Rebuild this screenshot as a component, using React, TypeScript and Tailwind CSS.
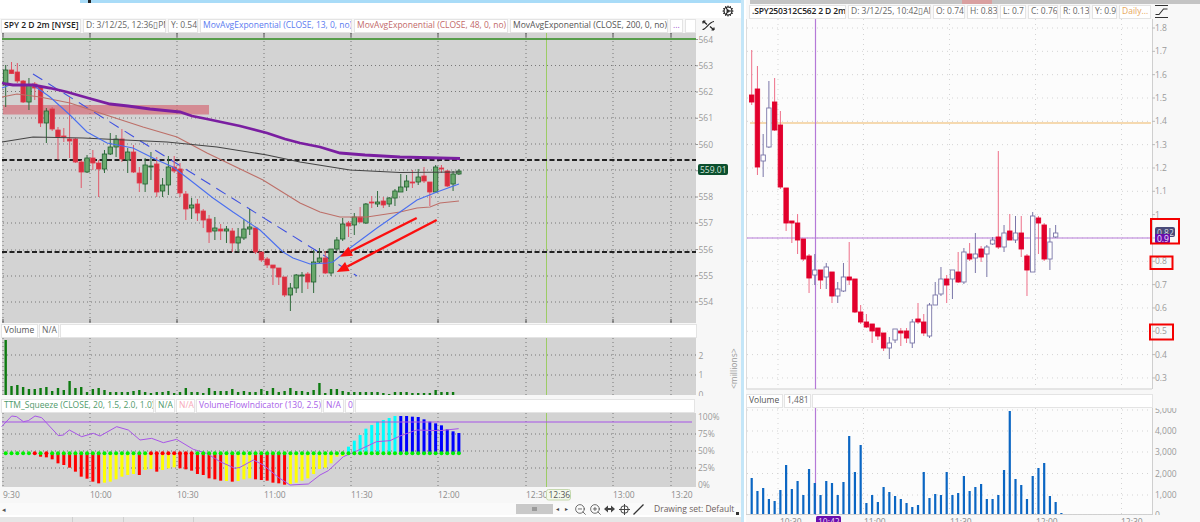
import { Cog, ZoomIn, ZoomOut } from 'lucide-react';

type Candle = [number, number, number, number]; // wick top, body top, body bottom, wick bottom

const GREEN = 'g';
const RED = 'r';

// page y coordinates, one entry per 2m bar
const spy: [string, ...Candle][] = [
  [GREEN, 65, 70, 85, 107], [RED, 62, 70, 73.5, 74], [RED, 63, 72, 81, 83], [RED, 80, 81, 102, 103],
  [GREEN, 78, 85, 102, 110], [RED, 82, 84, 88, 100], [RED, 87, 87, 123, 127], [GREEN, 108, 111, 123, 143],
  [RED, 107, 109, 129, 131], [RED, 127, 130, 137, 160], [RED, 128, 136, 137, 142], [RED, 97, 139, 141, 158],
  [RED, 138, 139, 162, 163], [RED, 160, 162, 172, 188], [GREEN, 155, 158, 172, 173], [RED, 150, 158, 163, 170],
  [RED, 160, 163, 169, 197], [GREEN, 150, 154, 169, 173], [GREEN, 133, 147, 154, 155], [GREEN, 135, 139, 147, 157],
  [RED, 129, 139, 159, 162], [GREEN, 148, 152, 160, 173], [RED, 145, 152, 172, 173], [RED, 167, 173, 183, 192],
  [GREEN, 158, 165, 184, 192], [GREEN, 152, 166, 167, 180], [RED, 157, 164, 192, 197], [GREEN, 178, 185, 191, 197],
  [GREEN, 156, 167, 185, 195], [RED, 156, 167, 171, 173], [RED, 163, 169, 193, 197], [RED, 191, 194, 209, 220],
  [GREEN, 198, 205, 208, 219], [RED, 199, 204, 213, 221], [RED, 209, 211, 220, 228], [RED, 215, 219, 232, 243],
  [GREEN, 217, 228, 231, 240], [RED, 224, 229, 231, 240], [GREEN, 226, 229, 231, 243], [RED, 228, 231, 243, 252],
  [GREEN, 228, 237, 243, 252], [GREEN, 219, 229, 238, 240], [GREEN, 209, 227, 229, 235], [RED, 228, 228, 252, 254],
  [RED, 252, 252, 260, 262], [RED, 257, 259, 265, 268], [RED, 265, 265, 268, 285], [RED, 268, 268, 277, 285],
  [RED, 277, 277, 295, 297], [GREEN, 283, 288, 295, 311], [GREEN, 274, 275, 288, 293], [GREEN, 272, 275, 276, 293],
  [RED, 272, 274, 282, 289], [GREEN, 250, 262, 282, 293], [GREEN, 248, 258, 262, 263], [RED, 251, 258, 273, 274],
  [GREEN, 249, 249, 273, 276], [GREEN, 237, 240, 249, 251], [GREEN, 218, 224, 239, 241], [RED, 221, 223, 226, 237],
  [GREEN, 213, 217, 225, 235], [RED, 207, 217, 222, 222], [GREEN, 203, 204, 223, 224], [RED, 196, 202, 203, 208],
  [GREEN, 191, 202, 204, 207], [RED, 197, 201, 205, 208], [GREEN, 197, 198, 204, 207], [GREEN, 189, 191, 198, 206],
  [GREEN, 174, 187, 192, 192], [GREEN, 175, 181, 187, 191], [RED, 170, 182, 183, 188], [GREEN, 169, 177, 182, 185],
  [RED, 167, 176, 181, 183], [RED, 182, 182, 192, 206], [GREEN, 165, 167, 192, 192], [RED, 165, 168, 169, 173],
  [RED, 170, 171, 186, 187], [GREEN, 171, 174, 184, 191], [GREEN, 169, 171, 174, 175],
];

const option: [string, ...Candle][] = [
  [RED, 50, 95, 102, 105], [RED, 66, 89, 167, 175], ['w', 134, 155, 161, 177], ['w', 81, 108, 147, 148],
  [RED, 78, 102, 130, 131], [RED, 111, 125, 187, 189], [RED, 188, 188, 223, 231], [RED, 221, 221, 223, 243],
  [RED, 214, 223, 240, 254], [RED, 239, 239, 259, 261], [RED, 254, 256, 278, 293], ['w', 254, 270, 275, 285],
  [RED, 270, 270, 280, 289], ['w', 263, 267, 277, 289], [RED, 272, 272, 296, 303], ['w', 282, 289, 296, 303],
  ['w', 263, 277, 291, 292], [RED, 242, 277, 280, 285], [RED, 279, 279, 312, 313], [RED, 305, 312, 322, 324],
  [RED, 314, 322, 327, 328], [RED, 324, 324, 331, 343], [RED, 328, 328, 336, 340], [RED, 333, 333, 348, 351],
  ['w', 337, 343, 348, 359], ['w', 329, 329, 340, 343], [RED, 328, 331, 333, 346], [RED, 328, 331, 338, 343],
  ['w', 319, 322, 343, 348], [RED, 303, 319, 322, 324], [RED, 314, 322, 333, 336], ['w', 303, 305, 336, 338],
  ['w', 282, 295, 305, 305], ['w', 267, 279, 294, 296], [RED, 275, 279, 285, 303], ['w', 270, 270, 279, 299],
  [RED, 252, 272, 282, 283], ['w', 248, 252, 282, 284], [RED, 243, 254, 259, 261], ['w', 233, 254, 258, 273],
  [RED, 246, 249, 257, 262], ['w', 245, 247, 254, 277], ['w', 237, 240, 244, 245], [RED, 151, 237, 247, 249],
  ['w', 225, 233, 247, 252], [RED, 214, 231, 240, 240], ['w', 216, 233, 240, 243], [RED, 216, 233, 249, 257],
  [RED, 254, 256, 270, 296], ['w', 212, 216, 272, 272], [RED, 216, 218, 223, 254], [RED, 223, 225, 259, 261],
  ['w', 228, 242, 259, 270], ['w', 225, 233, 237, 238],
];

const optionVolTops = [
  478, 491, 488, 499, 501, 490, 465, 489, 481, 495, 469, 483, 495, 481, 483, 495, 482, 436, 472, 445, 503, 495, 502,
  487, 492, 496, 499, 503, 507, 505, 472, 498, 494, 495, 472, 495, 493, 476, 491, 487, 484, 499, 499, 495, 470, 411,
  479, 485, 499, 476, 468, 463, 496, 502, 513,
];

const spyVol = [
  55, 9, 10, 8, 6, 6, 7, 8, 4, 7, 5, 14, 7, 8, 3, 6, 7, 5, 3, 3, 3, 3, 4, 5, 3, 2, 3, 3, 4, 2, 3, 7, 3, 3, 2, 7, 4, 4, 4,
  6, 3, 4, 3, 3, 6, 4, 7, 3, 4, 7, 4, 4, 3, 5, 12, 2, 6, 6, 4, 3, 3, 3, 3, 3, 3, 2, 1, 3, 3, 3, 2, 2, 2, 2, 5, 3, 3, 3,
];

// histogram bottoms, read off the reference at 3x from y=350
const squeezeDown: [number, string][] = [
  [320, 'r'], [322, 'r'], [328, 'r'], [340, 'r'], [345, 'r'], [353, 'r'], [365, 'r'], [380, 'r'], [386, 'r'], [395, 'r'],
  [400, 'r'], [398, 'y'], [395, 'y'], [388, 'y'], [380, 'y'], [375, 'y'], [372, 'y'], [375, 'r'], [360, 'y'], [357, 'y'],
  [365, 'r'], [360, 'y'], [355, 'y'], [352, 'y'], [355, 'r'], [358, 'r'], [362, 'r'], [372, 'r'], [375, 'r'], [385, 'r'],
  [388, 'r'], [392, 'r'], [393, 'y'], [395, 'r'], [393, 'y'], [388, 'y'], [385, 'y'], [388, 'r'], [390, 'r'], [392, 'r'],
  [398, 'r'], [400, 'r'], [404, 'r'], [402, 'y'], [398, 'y'], [392, 'y'], [385, 'y'], [372, 'y'], [357, 'y'], [353, 'y'],
  [340, 'y'], [320, 'y'], [318, 'y'],
];
const squeezeCyan = [290, 272, 255, 236, 225, 215, 210, 204, 198];
const squeezeBlue = [198, 198, 200, 201, 208, 215, 220, 226, 238, 244, 249];
const redDots = [5, 7, 25, 26, 27, 28, 29, 30, 31, 32];

const vfi = [
  [5, 230], [35, 198], [50, 200], [70, 215], [85, 212], [105, 198], [125, 203], [175, 257], [190, 255], [208, 240],
  [245, 260], [280, 250], [300, 258], [350, 230], [385, 240], [420, 270], [455, 265], [490, 278], [530, 268], [580, 298],
  [620, 310], [660, 335], [705, 355], [720, 352], [760, 330], [790, 345], [835, 382], [870, 405], [925, 402], [960, 375],
  [985, 362], [1030, 320], [1070, 303], [1130, 275], [1170, 272], [1200, 258], [1250, 240], [1320, 242], [1376, 236],
].map(([x, y]) => `${x / 3},${350 + y / 3}`).join(' ');

const ema200 = '2,83 7,84 13,85 33,85 50,88 67,92 88,98 110,104 128,106 150,109 180,112 192,116 207,119 240,126 267,133 285,139 300,143 320,147 340,153 365,155 400,157 460,158.5';
const ema200b = '2,142 33,137 83,138 167,142 217,147 267,155 300,162 350,170 400,172.5 460,172';
const ema48 = '2,97 17,94 40,97 70,103 100,113 143,127 177,137 207,153 263,180 300,203 320,212 340,217 367,217 400,212 417,208 430,207 440,203 459,201';
const ema13 = '2,88 10,85 33,85 50,97 70,115 87,132 107,143 133,148 157,160 173,167 190,180 213,198 233,212 260,230 283,252 293,258 310,264 327,263 333,262 350,248 377,228 400,212 417,200 437,192 459,184';

const leftGridX = [90, 177, 264, 351, 438, 526, 613, 671];
const rightGridX = [778, 863.5, 949.5, 1035.5, 1121.5];
const barX = (i: number) => 5.7 + 5.81 * i;
const optX = (i: number) => 751.7 + 5.735 * i;

function Chip({ w, className, children }: { w: string; className?: string; children?: React.ReactNode }) {
  return (
    <div className={`${w} ${className ?? ''} h-[14px] shrink-0 flex items-center px-[2px] bg-white border border-[#e4e4e4] overflow-hidden whitespace-nowrap text-[8.5px] leading-none`}>
      {children}
    </div>
  );
}

function Arrow({ x1, y1, x2, y2 }: { x1: number; y1: number; x2: number; y2: number }) {
  const len = Math.hypot(x2 - x1, y2 - y1);
  const ux = (x2 - x1) / len;
  const uy = (y2 - y1) / len;
  const bx = x2 - ux * 12;
  const by = y2 - uy * 12;
  const head = `${x2},${y2} ${bx - uy * 5},${by + ux * 5} ${bx + uy * 5},${by - ux * 5}`;
  return (
    <g>
      <line x1={x1} y1={y1} x2={bx} y2={by} stroke="#fb0f0f" strokeWidth="2.4" />
      <polygon points={head} fill="#fb0f0f" />
    </g>
  );
}

function MainPane() {
  const rows = [65.5, 91.5, 118, 144, 170, 197, 223, 250, 276, 302];
  const labels = [564, 563, 562, 561, 560, 559, 558, 557, 556, 555, 554];
  return (
    <svg className="block shrink-0" width="741" height="290" viewBox="0 33 741 290">
      <rect x="2" y="33" width="694" height="290" fill="#d3d3d3" />
      {rows.map(y => <line key={y} x1="3" x2="696" y1={y} y2={y} stroke="#777" strokeDasharray="1 3" />)}
      {[3, ...leftGridX].map(x => (
        <g key={x}>
          <line x1={x} x2={x} y1="33" y2="323" stroke="#777" strokeDasharray="1 3" />
          <line x1={x} x2={x} y1="33" y2="37" stroke="#555" />
          <line x1={x} x2={x} y1="319" y2="323" stroke="#555" />
        </g>
      ))}
      <line x1="546.5" x2="546.5" y1="33" y2="323" stroke="#9ccc65" />
      <line x1="2" x2="696" y1="39" y2="39" stroke="#2e8b1e" strokeWidth="1.6" />
      <rect x="3" y="105" width="206" height="9.5" fill="#d5505f" opacity="0.55" />
      <line x1="2" x2="696" y1="160" y2="160" stroke="#222" strokeWidth="2" strokeDasharray="5 2.5" />
      <line x1="2" x2="696" y1="252" y2="252" stroke="#222" strokeWidth="2" strokeDasharray="5 2.5" />
      <line x1="33" y1="74" x2="357" y2="276" stroke="#3f51e0" strokeWidth="1.1" strokeDasharray="11 7" />
      {spy.map(([c, wt, bt, bb, wb], i) => {
        const x = barX(i);
        const up = c === GREEN;
        return (
          <g key={i}>
            <line x1={x} x2={x} y1={wt} y2={wb} stroke={up ? '#2f6b3c' : '#e0596a'} />
            <rect x={x - 2.2} y={bt} width="4.4" height={Math.max(bb - bt, 1)} fill={up ? '#69a86c' : '#d92f40'} stroke={up ? '#1f5f2d' : '#e0394a'} strokeWidth="0.8" />
          </g>
        );
      })}
      <polyline points={ema48} fill="none" stroke="#bd6f68" strokeWidth="1.1" />
      <polyline points={ema200b} fill="none" stroke="#444" strokeWidth="1.1" />
      <polyline points={ema13} fill="none" stroke="#4a6ff0" strokeWidth="1.1" />
      <polyline points={ema200} fill="none" stroke="#7a1ea1" strokeWidth="2.8" />
      <Arrow x1={416.7} y1={218} x2={340} y2={256.7} />
      <Arrow x1={436.7} y1={220} x2={336.7} y2={272} />
      {labels.map((p, i) => (
        <g key={p}>
          <line x1="696" x2="698" y1={39.5 + i * 26.25} y2={39.5 + i * 26.25} stroke="#999" />
          {p !== 559 && <text x="698.5" y={42.5 + i * 26.25} fontSize="8.5" fill="#9a9a9a">{p}</text>}
        </g>
      ))}
      <rect x="698" y="164" width="30" height="11" rx="2" fill="#0b4f2e" />
      <text x="700" y="172.5" fontSize="8.5" fill="#d6e6dc">559.01</text>
    </svg>
  );
}

function VolumePane() {
  return (
    <svg className="block shrink-0" width="741" height="58" viewBox="0 338 741 58">
      <rect x="2" y="338" width="694" height="57" fill="#d3d3d3" />
      {[355, 375].map(y => <line key={y} x1="3" x2="696" y1={y} y2={y} stroke="#777" strokeDasharray="1 3" />)}
      {[3, ...leftGridX].map(x => <line key={x} x1={x} x2={x} y1="338" y2="395" stroke="#777" strokeDasharray="1 3" />)}
      <line x1="546.5" x2="546.5" y1="338" y2="395" stroke="#9ccc65" />
      {spyVol.map((h, i) => <rect key={i} x={barX(i) - 1.2} y={395 - h} width="2.4" height={h} fill="#0d7a10" />)}
      {[[2, 359], [1, 378], [0, 398]].map(([n, y]) => <text key={n} x="698.5" y={y} fontSize="8.5" fill="#9a9a9a">{n}</text>)}
      <text transform="translate(737 389) rotate(-90)" fontSize="8.5" fill="#9a9a9a">&lt;millions&gt;</text>
    </svg>
  );
}

function SqueezePane() {
  const toY = (z: number) => 350 + z / 3;
  return (
    <svg className="block shrink-0" width="741" height="75" viewBox="0 413 741 75">
      <rect x="2" y="413" width="694" height="74" fill="#d3d3d3" />
      {[434, 451, 468].map(y => <line key={y} x1="3" x2="696" y1={y} y2={y} stroke="#777" strokeDasharray="1 3" />)}
      {[3, ...leftGridX].map(x => <line key={x} x1={x} x2={x} y1="413" y2="487" stroke="#777" strokeDasharray="1 3" />)}
      <line x1="546.5" x2="546.5" y1="413" y2="487" stroke="#9ccc65" />
      {squeezeDown.map(([z, c], i) => (
        <rect key={i} x={barX(i + 6) - 1.5} y="453" width="3" height={toY(z) - 453} fill={c === 'r' ? '#ff0000' : '#ffff00'} />
      ))}
      {squeezeCyan.map((z, i) => <rect key={i} x={barX(i + 59) - 1.5} y={toY(z)} width="3" height={453 - toY(z)} fill="#00ffff" />)}
      {squeezeBlue.map((z, i) => <rect key={i} x={barX(i + 68) - 1.5} y={toY(z)} width="3" height={453 - toY(z)} fill="#0000ff" />)}
      <line x1="2" x2="692" y1="422" y2="422" stroke="#a855e8" strokeWidth="1.2" />
      <polyline points={vfi} fill="none" stroke="#a855e8" strokeWidth="1" />
      {Array.from({ length: 79 }, (_, i) => (
        <circle key={i} cx={barX(i)} cy="453.3" r="2" fill={redDots.includes(i) ? '#ff0000' : '#00f000'} />
      ))}
      {[['100%', 420], ['75%', 437], ['50%', 454], ['25%', 471], ['0%', 488]].map(([t, y]) => (
        <text key={t} x="698" y={y} fontSize="8.5" fill="#9a9a9a">{t}</text>
      ))}
    </svg>
  );
}

function TimeAxis() {
  const ticks: [string, number][] = [['9:30', 3], ['10:00', 90], ['10:30', 177], ['11:00', 264], ['11:30', 351], ['12:00', 438], ['12:30', 526], ['13:00', 613], ['13:20', 671]];
  return (
    <svg className="block shrink-0" width="741" height="15" viewBox="0 488 741 15">
      {ticks.map(([t, x]) => <text key={t} x={x} y="498" fontSize="8.5" fill="#8c8c8c">{t}</text>)}
      <rect x="546.5" y="489.5" width="24" height="10.5" rx="2" fill="#f3f8ec" stroke="#c5d8ae" />
      <text x="548.5" y="498" fontSize="8.5" fill="#555">12:36</text>
    </svg>
  );
}

function Toolbar() {
  return (
    <div className="h-[12px] shrink-0 flex items-center bg-[#fafafa] text-[#444]">
      <span className="pl-[2px] w-[516px] shrink-0 text-[7px] leading-none text-[#555]">◂</span>
      <div className="w-[37px] h-[10px] shrink-0 bg-[#c9c9c9] flex items-center justify-center">
        <div className="w-[5px] h-[4px] bg-[#9a9a9a]" />
      </div>
      <span className="ml-[3px] w-[9px] shrink-0 text-[6px] leading-none">◂</span>
      <span className="w-[9px] shrink-0 text-[6px] leading-none">▸</span>
      <ZoomOut size={13} strokeWidth={1.4} className="shrink-0 mr-[2px]" />
      <ZoomIn size={13} strokeWidth={1.4} className="shrink-0" />
      <svg className="ml-[2px] shrink-0" width="11" height="8" viewBox="0 0 11 8">
        <path d="M0 4 L4 0.5 V7.5 Z M11 4 L7 0.5 V7.5 Z M4 3 H7 V5 H4 Z" fill="#444" />
      </svg>
      <svg className="ml-[4px] shrink-0" width="11" height="11" viewBox="0 0 11 11" fill="none" stroke="#444">
        <circle cx="5.5" cy="5.5" r="3.8" />
        <path d="M5.5 0 V11 M0 5.5 H11" />
      </svg>
      <svg className="ml-[3px] shrink-0" width="11" height="11" viewBox="0 0 11 11" fill="none" stroke="#333" strokeWidth="1.3">
        <path d="M0.5 10.5 L10.5 0.5" />
      </svg>
      <span className="ml-[10px] w-[81px] shrink-0 text-[8.5px] leading-none text-[#6e5f60] whitespace-nowrap">Drawing set: Default</span>
      <div className="ml-[1px] mt-[9px] w-[3px] h-[3px] shrink-0 bg-[#333]" />
    </div>
  );
}

function LeftPanel() {
  return (
    <div className="w-[741px] shrink-0 flex flex-col bg-[#f7f7f7]">
      <div className="h-[3px] shrink-0 flex bg-[#a9dcf8]">
        <div className="w-[80px] bg-white" />
        <div className="ml-[8px] w-[3px] bg-[#222]" />
      </div>
      <div className="h-[15px] shrink-0 flex items-center justify-end pr-[7px] bg-white">
        <Cog size={12} strokeWidth={2.2} className="text-[#222]" />
      </div>
      <div className="h-[15px] shrink-0 flex items-center gap-[2px] pl-[1px] bg-[#f7f7f7]">
        <Chip w="w-[80px]" className="font-semibold text-[#222]">SPY 2 D 2m [NYSE]</Chip>
        <Chip w="w-[83px]" className="text-[#666]">D: 3/12/25, 12:36▯PM</Chip>
        <Chip w="w-[30px]" className="text-[#666]">Y: 0.54</Chip>
        <Chip w="w-[152px]" className="text-[#5b7bf0]">MovAvgExponential (CLOSE, 13, 0, no)</Chip>
        <Chip w="w-[154px]" className="text-[#c26a6a]">MovAvgExponential (CLOSE, 48, 0, no)</Chip>
        <Chip w="w-[158px]" className="text-[#555]">MovAvgExponential (CLOSE, 200, 0, no)</Chip>
        <Chip w="w-[13px]" className="text-[#a050d0]">...</Chip>
        <Chip w="w-[11px]" />
        <svg className="ml-[4px] shrink-0" width="13" height="11" viewBox="0 0 13 11" fill="none" stroke="#222" strokeWidth="1.2">
          <path d="M0.5 9.5 C4 9.5 7 2 12 1.5 M1 1 L5 4.5 M1 1 H3.5 M1 1 V3.5 M12 10 L8 6.5 M12 10 H9.5 M12 10 V7.5" />
        </svg>
      </div>
      <MainPane />
      <div className="h-[15px] shrink-0 flex items-center gap-[1px] pl-[1px]">
        <Chip w="w-[37px]" className="text-[#555]">Volume</Chip>
        <Chip w="w-[20px]" className="text-[#666]">N/A</Chip>
        <Chip w="w-[637px]" />
      </div>
      <VolumePane />
      <div className="h-[2px] shrink-0" />
      <div className="h-[15px] shrink-0 flex items-center gap-[1px] pl-[1px]">
        <Chip w="w-[153px]" className="text-[#4f9a6a]">TTM_Squeeze (CLOSE, 20, 1.5, 2.0, 1.0)</Chip>
        <Chip w="w-[20px]" className="text-[#4f9a6a]">N/A</Chip>
        <Chip w="w-[19px]" className="text-[#f7a9b8]">N/A</Chip>
        <Chip w="w-[126px]" className="text-[#a860e8]">VolumeFlowIndicator (130, 2.5)</Chip>
        <Chip w="w-[21px]" className="text-[#a860e8]">N/A</Chip>
        <Chip w="w-[9px]" className="text-[#a860e8]">0</Chip>
        <Chip w="w-[340px]" />
      </div>
      <SqueezePane />
      <TimeAxis />
      <Toolbar />
      <div className="h-[2px] shrink-0 bg-white" />
      <div className="h-[5px] shrink-0 flex bg-[#e6e6e6]">
        <div className="w-[73px] border-r border-[#cfcfcf]" />
        <div className="w-[51px] border-r border-[#cfcfcf]" />
        <div className="w-[70px] border-r border-[#cfcfcf]" />
      </div>
    </div>
  );
}

function OptionPane() {
  const rows = [1.8, 1.7, 1.6, 1.5, 1.4, 1.3, 1.2, 1.1, 1, 0.9, 0.8, 0.7, 0.6, 0.5, 0.4, 0.3];
  const rowY = (i: number) => 28 + i * 23.33;
  return (
    <svg className="block shrink-0" width="454" height="371" viewBox="746 19 454 371">
      <rect x="746" y="19" width="406" height="370" fill="#fcfcfc" />
      <line x1="1152.5" x2="1152.5" y1="19" y2="389" stroke="#cfcfcf" />
      <line x1="746" x2="1152" y1="389" y2="389" stroke="#cfcfcf" />
      <line x1="746.5" x2="746.5" y1="19" y2="389" stroke="#dcdcdc" />
      {rows.map((p, i) => (
        <g key={p}>
          <line x1="747" x2="1152" y1={rowY(i)} y2={rowY(i)} stroke="#d4d4d4" strokeDasharray="1 4" />
          <line x1="1152" x2="1155" y1={rowY(i)} y2={rowY(i)} stroke="#bbb" />
          {p !== 0.9 && <text x="1155" y={rowY(i) + 3} fontSize="8.5" fill="#9a9a9a">{p}</text>}
        </g>
      ))}
      {rightGridX.map(x => <line key={x} x1={x} x2={x} y1="19" y2="389" stroke="#d4d4d4" strokeDasharray="1 4" />)}
      <line x1="750" x2="1151" y1="123" y2="123" stroke="#eeb565" strokeWidth="1.2" />
      <line x1="815.5" x2="815.5" y1="19" y2="389" stroke="#b57ad8" strokeWidth="1.2" />
      <line x1="747" x2="1151" y1="238" y2="238" stroke="#b57ad8" strokeWidth="1.2" />
      {option.map(([c, wt, bt, bb, wb], i) => {
        const x = optX(i);
        const down = c === RED;
        return (
          <g key={i}>
            <line x1={x} x2={x} y1={wt} y2={wb} stroke={down ? '#ee6f88' : '#7a76a8'} />
            <rect x={x - 2.2} y={bt} width="4.4" height={Math.max(bb - bt, 1)} fill={down ? '#e2002c' : '#ffffff'} stroke={down ? '#e2002c' : '#7a76a8'} strokeWidth="0.9" />
          </g>
        );
      })}
      <rect x="1155" y="227" width="20" height="10" rx="2" fill="#4a4a78" />
      <text x="1157" y="235.5" fontSize="8.5" fill="#d8d8e6">0.82</text>
      <rect x="1155" y="234" width="15" height="9" rx="1" fill="#6a0dad" />
      <text x="1157" y="241.5" fontSize="8.5" fill="#f0e6fa">0.9</text>
      <rect x="1151" y="219" width="28" height="24.5" fill="none" stroke="#f40000" strokeWidth="2" />
      <rect x="1150.5" y="256.5" width="22" height="12.5" fill="none" stroke="#f40000" strokeWidth="2" />
      <rect x="1150" y="324.5" width="23" height="15" fill="none" stroke="#f40000" strokeWidth="2" />
    </svg>
  );
}

function OptionVolume() {
  const rows = [[5000, 410], [4000, 431], [3000, 452], [2000, 473.5], [1000, 495], [0, 515]];
  return (
    <svg className="block shrink-0" width="454" height="107" viewBox="746 408 454 107">
      <rect x="746" y="408" width="406" height="107" fill="#fcfcfc" />
      <line x1="1152.5" x2="1152.5" y1="408" y2="515" stroke="#cfcfcf" />
      <line x1="746.5" x2="746.5" y1="408" y2="515" stroke="#dcdcdc" />
      <line x1="746" x2="1152" y1="514.5" y2="514.5" stroke="#cfcfcf" />
      {rows.map(([v, y]) => (
        <g key={v}>
          <line x1="747" x2="1152" y1={y} y2={y} stroke="#d4d4d4" strokeDasharray="1 4" />
          <text x="1155" y={y + 3} fontSize="8.5" fill="#9a9a9a">{v.toLocaleString('en-US')}</text>
        </g>
      ))}
      {rightGridX.map(x => <line key={x} x1={x} x2={x} y1="408" y2="515" stroke="#d4d4d4" strokeDasharray="1 4" />)}
      <line x1="815.5" x2="815.5" y1="408" y2="515" stroke="#b57ad8" strokeWidth="1.2" />
      {optionVolTops.map((y, i) => <rect key={i} x={optX(i) - 1.1} y={y} width="2.2" height={514 - y} fill="#0b66c3" />)}
    </svg>
  );
}

function RightPanel() {
  return (
    <div className="flex-1 flex flex-col bg-[#f8f8f8]">
      <div className="h-[4px] shrink-0 ml-[4px] flex bg-[#c4c4c4]">
        <div className="ml-[212px] w-[30px] bg-[#d9a0a0]" />
      </div>
      <div className="h-[15px] shrink-0 flex items-center gap-[2px] pl-[3px]">
        <Chip w="w-[97px]" className="font-semibold tracking-[-0.15px] text-[#222]">.SPY250312C562 2 D 2m</Chip>
        <Chip w="w-[83px]" className="text-[#666]">D: 3/12/25, 10:42▯AM</Chip>
        <Chip w="w-[32px]" className="text-[#666]">O: 0.74</Chip>
        <Chip w="w-[31px]" className="text-[#666]">H: 0.83</Chip>
        <Chip w="w-[26px]" className="text-[#666]">L: 0.7</Chip>
        <Chip w="w-[30px]" className="text-[#666]">C: 0.76</Chip>
        <Chip w="w-[30px]" className="text-[#666]">R: 0.13</Chip>
        <Chip w="w-[25px]" className="text-[#666]">Y: 0.9</Chip>
        <Chip w="w-[32px]" className="text-[#e8a85c]">Daily...</Chip>
        <svg className="ml-[2px] shrink-0" width="13" height="13" viewBox="0 0 13 13" fill="none" stroke="#333">
          <path d="M0 0.5 H13 M0 12.5 H13" />
          <path d="M0.5 9.5 H4 L8.5 4 H12.5" strokeWidth="1.1" />
        </svg>
      </div>
      <OptionPane />
      <div className="h-[3px] shrink-0" />
      <div className="h-[15px] shrink-0 flex items-center gap-[1px]">
        <Chip w="w-[37px]" className="text-[#555]">Volume</Chip>
        <Chip w="w-[27px]" className="text-[#666]">1,481</Chip>
        <Chip w="w-[341px]" />
      </div>
      <OptionVolume />
      <svg className="block shrink-0" width="454" height="7" viewBox="746 515 454 7">
        {[['10:30', 780], ['11:00', 864], ['11:30', 950], ['12:00', 1036], ['12:30', 1121]].map(([t, x]) => (
          <text key={t} x={x} y="524.5" fontSize="8.5" fill="#8c8c8c">{t}</text>
        ))}
        <rect x="816" y="516" width="25" height="8" rx="1.5" fill="#6a0dad" />
        <text x="818" y="524.5" fontSize="8.5" fill="#eadcf6">10:42</text>
      </svg>
    </div>
  );
}

export default function App() {
  return (
    <div className="w-[1200px] h-[522px] flex overflow-hidden bg-white font-['Open_Sans',sans-serif]">
      <LeftPanel />
      <div className="w-[3px] shrink-0 bg-[#c4e6f8]" />
      <div className="w-[2px] shrink-0 bg-white" />
      <RightPanel />
    </div>
  );
}
